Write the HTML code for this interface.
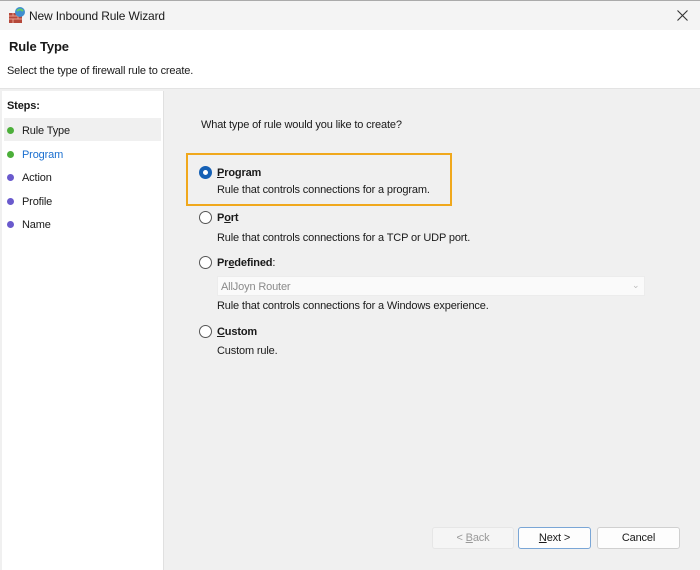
<!DOCTYPE html>
<html><head><meta charset="utf-8"><style>
*{margin:0;padding:0;box-sizing:border-box}
body{width:700px;height:570px;background:#f0f0f0;font-family:"Liberation Sans",sans-serif;font-size:11px;letter-spacing:-0.15px;color:#1a1a1a;position:relative;overflow:hidden}
.abs{position:absolute}
.title{left:0;top:0;width:700px;height:30px;background:#f4f4f4;border-top:1px solid #aaa}
.hdr{left:0;top:30px;width:700px;height:59px;background:#fff;border-bottom:1px solid #e3e3e3}
.left{left:2px;top:91px;width:162px;height:479px;background:#fff;border-right:1px solid #e0e0e0}
.dot{width:7px;height:7px;border-radius:50%}
.radio{width:13px;height:13px;border-radius:50%;border:1px solid #555;background:#fff}
.btn{height:22px;border:1px solid #d0d0d0;background:#fdfdfd;border-radius:3px;text-align:center;line-height:20px;font-size:11px}
u{text-decoration:underline}
.t{margin-top:1px}
</style></head><body>
<div class="abs title"></div>
<svg class="abs" style="left:8px;top:6px" width="18" height="18"><rect x="1" y="7" width="13" height="10" fill="#b5483a"/><path d="M1 10h13M1 13h13M5 7v3M10 10v3M5 13v4" stroke="#e8a090" stroke-width="1"/><circle cx="12" cy="6" r="5" fill="#3f8fd0"/><path d="M9 5q3-3 6 0" stroke="#6c6" stroke-width="2" fill="none"/></svg>
<div class="abs" style="left:29px;top:9px;font-size:12px">New Inbound Rule Wizard</div>
<svg class="abs" style="left:677px;top:10px" width="11" height="11"><path d="M0.5 0.5L10.5 10.5M10.5 0.5L0.5 10.5" stroke="#333" stroke-width="1.1"/></svg>
<div class="abs hdr"></div>
<div class="abs" style="left:9px;top:39px;font-size:13px;font-weight:bold">Rule Type</div>
<div class="abs" style="left:7px;top:65px">Select the type of firewall rule to create.</div>
<div class="abs left"></div>
<div class="abs" style="left:7px;top:100px;font-weight:bold">Steps:</div>
<div class="abs" style="left:4px;top:118px;width:157px;height:23px;background:#f0f0f0"></div>
<div class="abs dot" style="left:7px;top:127px;background:#4caf3a"></div><div class="abs" style="left:22px;top:125px">Rule Type</div>
<div class="abs dot" style="left:7px;top:151px;background:#4caf3a"></div><div class="abs" style="left:22px;top:149px;color:#1a6fd0">Program</div>
<div class="abs dot" style="left:7px;top:174px;background:#6a5acd"></div><div class="abs" style="left:22px;top:172px">Action</div>
<div class="abs dot" style="left:7px;top:198px;background:#6a5acd"></div><div class="abs" style="left:22px;top:196px">Profile</div>
<div class="abs dot" style="left:7px;top:221px;background:#6a5acd"></div><div class="abs" style="left:22px;top:219px">Name</div>

<div class="abs" style="left:201px;top:119px">What type of rule would you like to create?</div>
<div class="abs" style="left:186px;top:153px;width:266px;height:53px;border:2px solid #f0a81c"></div>
<div class="abs radio" style="left:199px;top:166px;border:4px solid #1560b5"></div>
<div class="abs" style="left:217px;top:167px;font-weight:bold"><u>P</u>rogram</div>
<div class="abs" style="left:217px;top:184px">Rule that controls connections for a program.</div>
<div class="abs radio" style="left:199px;top:211px"></div>
<div class="abs" style="left:217px;top:212px;font-weight:bold">P<u>o</u>rt</div>
<div class="abs" style="left:217px;top:232px">Rule that controls connections for a TCP or UDP port.</div>
<div class="abs radio" style="left:199px;top:256px"></div>
<div class="abs" style="left:217px;top:257px;font-weight:bold">Pr<u>e</u>defined<span style="font-weight:normal">:</span></div>
<div class="abs" style="left:217px;top:276px;width:428px;height:20px;background:#fafafa;border:1px solid #ececec"></div>
<div class="abs" style="left:221px;top:281px;color:#8a8a8a">AllJoyn Router</div>
<div class="abs" style="left:632px;top:280px;color:#bbb;font-size:9px">⌄</div>
<div class="abs" style="left:217px;top:300px">Rule that controls connections for a Windows experience.</div>
<div class="abs radio" style="left:199px;top:325px"></div>
<div class="abs" style="left:217px;top:326px;font-weight:bold"><u>C</u>ustom</div>
<div class="abs" style="left:217px;top:345px">Custom rule.</div>

<div class="abs btn" style="left:432px;top:527px;width:82px;color:#999;background:#f5f5f5;border-color:#e6e6e6">&lt; <u>B</u>ack</div>
<div class="abs btn" style="left:518px;top:527px;width:73px;border-color:#7aa6d6"><u>N</u>ext &gt;</div>
<div class="abs btn" style="left:597px;top:527px;width:83px">Cancel</div>
</body></html>
